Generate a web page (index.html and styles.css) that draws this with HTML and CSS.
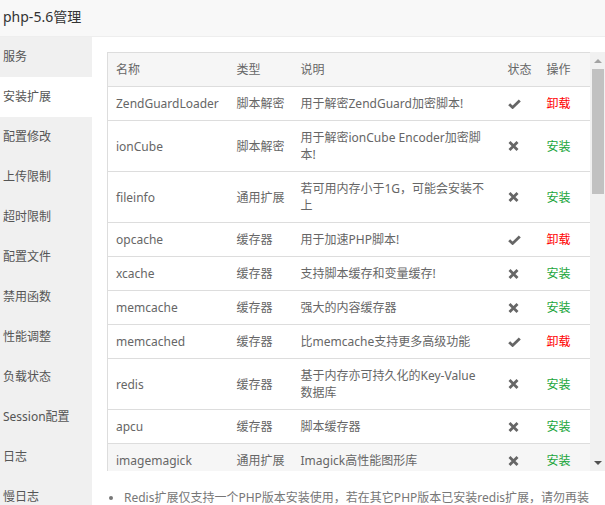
FILE: index.html
```html
<!DOCTYPE html>
<html lang="zh-CN">
<head>
    <meta charset="UTF-8">
    <title>php-5.6管理</title>
    <link rel="stylesheet" href="styles.css">
</head>
<body>
    <div class="layer-title">php-5.6管理</div>
    <div class="layer-main">
        <ul class="side-menu">
            <li>服务</li>
            <li class="on">安装扩展</li>
            <li>配置修改</li>
            <li>上传限制</li>
            <li>超时限制</li>
            <li>配置文件</li>
            <li>禁用函数</li>
            <li>性能调整</li>
            <li>负载状态</li>
            <li>Session配置</li>
            <li>日志</li>
            <li>慢日志</li>
        </ul>
        <div class="soft-content">
            <div class="table-wrap">
                <div class="table-box">
                    <table class="ext-table">
                        <colgroup>
                            <col class="c-name">
                            <col class="c-type">
                            <col class="c-desc">
                            <col class="c-state">
                            <col class="c-op">
                        </colgroup>
                        <thead>
                            <tr><th>名称</th><th>类型</th><th>说明</th><th>状态</th><th>操作</th></tr>
                        </thead>
                        <tbody id="ext-list"></tbody>
                    </table>
                </div>
                <div class="scrollbar">
                    <div class="sb-btn"><svg width="8" height="4" viewBox="0 0 8 4"><polygon points="4,0 8,4 0,4" fill="#a3a3a3"/></svg></div>
                    <div class="sb-track"><div class="sb-thumb"></div></div>
                    <div class="sb-btn"><svg width="8" height="4" viewBox="0 0 8 4"><polygon points="0,0 8,0 4,4" fill="#505050"/></svg></div>
                </div>
            </div>
            <ul class="help">
                <li>Redis扩展仅支持一个PHP版本安装使用，若在其它PHP版本已安装redis扩展，请勿再装</li>
            </ul>
        </div>
    </div>

    <script>
        // name, type, description, installed
        var exts = [
            ["ZendGuardLoader", "脚本解密", "用于解密ZendGuard加密脚本!", true],
            ["ionCube", "脚本解密", "用于解密ionCube Encoder加密脚本!", false],
            ["fileinfo", "通用扩展", "若可用内存小于1G，可能会安装不上", false],
            ["opcache", "缓存器", "用于加速PHP脚本!", true],
            ["xcache", "缓存器", "支持脚本缓存和变量缓存!", false],
            ["memcache", "缓存器", "强大的内容缓存器", false],
            ["memcached", "缓存器", "比memcache支持更多高级功能", true],
            ["redis", "缓存器", "基于内存亦可持久化的Key-Value数据库", false],
            ["apcu", "缓存器", "脚本缓存器", false],
            ["imagemagick", "通用扩展", "Imagick高性能图形库", false]
        ];

        var okIcon = '<svg class="ico" width="13" height="10" viewBox="0 0 13 10"><path d="M1.2 5.2 L4.6 8.4 L11.8 1.4" fill="none" stroke="#666" stroke-width="2.8"/></svg>';
        var noIcon = '<svg class="ico" width="11" height="10" viewBox="0 0 11 10"><path d="M1.5 1 L9.5 9 M9.5 1 L1.5 9" fill="none" stroke="#666" stroke-width="2.8"/></svg>';

        var html = "";
        exts.forEach(function (e) {
            html += '<tr' + (e[0] === "imagemagick" ? ' class="hover"' : '') + '>' +
                '<td>' + e[0] + '</td>' +
                '<td>' + e[1] + '</td>' +
                '<td class="desc">' + e[2] + '</td>' +
                '<td>' + (e[3] ? okIcon : noIcon) + '</td>' +
                '<td>' + (e[3] ? '<a class="btlink del">卸载</a>' : '<a class="btlink add">安装</a>') + '</td>' +
                '</tr>';
        });
        document.getElementById("ext-list").innerHTML = html;
    </script>
</body>
</html>
```

FILE: styles.css
```css
html, body {
    margin: 0;
    height: 100%;
    overflow: hidden;
}
body {
    font-family: "Noto Sans", "Noto Sans CJK SC", sans-serif;
    font-size: 12px;
    color: #666;
    background-color: #fff;
}
.layer-title {
    height: 36px;
    line-height: 34px;
    padding-left: 3px;
    font-size: 14px;
    color: #333;
    background-color: #f8f8f8;
    border-bottom: 1px solid #eee;
}
.layer-main {
    display: flex;
    height: calc(100% - 37px);
}
.side-menu {
    width: 92px;
    margin: 0;
    padding: 0;
    list-style: none;
    background-color: #f0f0f0;
    flex-shrink: 0;
}
.side-menu li {
    height: 40px;
    line-height: 40px;
    padding-left: 3px;
    color: #555;
    font-size: 12px;
    white-space: nowrap;
}
.side-menu li.on {
    background-color: #fff;
}
.soft-content {
    flex: 1;
    padding: 15px 0 0 15px;
    min-width: 0;
}
.table-wrap {
    display: flex;
    height: 419px;
}
.table-box {
    flex: 1;
    overflow: hidden;
}
/* static stand-in for the browser scrollbar */
.scrollbar {
    width: 15px;
    display: flex;
    flex-direction: column;
    background-color: #f1f1f1;
}
.sb-btn {
    height: 17px;
    display: flex;
    align-items: center;
    justify-content: center;
}
.sb-track {
    flex: 1;
}
.sb-thumb {
    height: 125px;
    margin: 0 1px 0 2px;
    background-color: #c1c1c1;
}
.ext-table {
    width: 100%;
    table-layout: fixed;
    border-collapse: collapse;
    border: 1px solid #ddd;
}
.c-name { width: 121px; }
.c-type { width: 64px; }
.c-desc { width: 207px; }
.c-state { width: 39px; }
.c-op { width: 52px; }
.ext-table th,
.ext-table td {
    padding: 8px;
    line-height: 17px;
    text-align: left;
    font-weight: normal;
    border-bottom: 1px solid #ddd;
    vertical-align: middle;
}
.ext-table th {
    white-space: nowrap;
    background-color: #f6f6f6;
}
.ext-table td.desc {
    padding-right: 14px;
}
.ext-table tr.hover td {
    background-color: #f6f6f6;
}
.ico {
    display: block;
}
.btlink.del {
    color: #f00;
}
.btlink.add {
    color: #20a53a;
}
.help {
    margin: 18px 0 0;
    padding-left: 17px;
    color: #777;
    line-height: 17px;
}
```
